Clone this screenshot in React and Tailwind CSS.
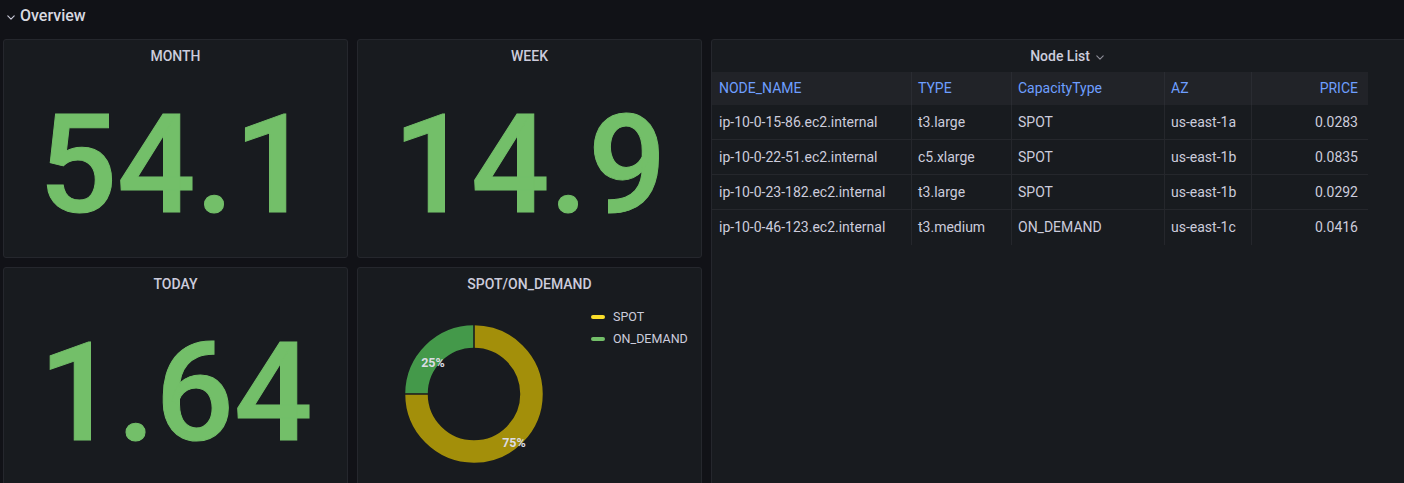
import React from "react";

const rows = [
  ["ip-10-0-15-86.ec2.internal", "t3.large", "SPOT", "us-east-1a", "0.0283"],
  ["ip-10-0-22-51.ec2.internal", "c5.xlarge", "SPOT", "us-east-1b", "0.0835"],
  ["ip-10-0-23-182.ec2.internal", "t3.large", "SPOT", "us-east-1b", "0.0292"],
  ["ip-10-0-46-123.ec2.internal", "t3.medium", "ON_DEMAND", "us-east-1c", "0.0416"],
];

function Chevron({ className }) {
  return (
    <svg className={className} viewBox="0 0 10 6" width="8" height="5" fill="none">
      <path d="M1 1l4 4 4-4" stroke="currentColor" strokeWidth="1.4" strokeLinecap="round" strokeLinejoin="round" />
    </svg>
  );
}

function Panel({ title, children, className = "" }) {
  return (
    <div className={`flex flex-col bg-[#181b1f] border border-[#25272d] rounded-[3px] overflow-hidden ${className}`}>
      <div className="h-[32px] shrink-0 flex items-center justify-center text-[14px] font-medium text-[#ccccdc]">
        {title}
      </div>
      {children}
    </div>
  );
}

function Stat({ title, value }) {
  return (
    <Panel title={title}>
      <div className="flex-1 flex items-center justify-center">
        <span className="text-[138px] leading-none font-medium text-[#73bf69] [-webkit-text-stroke:1px_#73bf69]">{value}</span>
      </div>
    </Panel>
  );
}

function Donut() {
  const r = 57.5;
  const c = 2 * Math.PI * r;
  const yellow = c * 0.75;
  const green = c * 0.25;
  return (
    <svg width="140" height="140" viewBox="0 0 140 140">
      <g transform="rotate(-90 70 70)">
        <circle cx="70" cy="70" r={r} fill="none" stroke="#a38f0a" strokeWidth="22.5"
          strokeDasharray={`${yellow} ${c}`} />
        <circle cx="70" cy="70" r={r} fill="none" stroke="#44994a" strokeWidth="22.5"
          strokeDasharray={`${green} ${c}`} strokeDashoffset={-yellow} />
      </g>
      <line x1="70" y1="0" x2="70" y2="24.5" stroke="#181b1f" strokeWidth="1.6" />
      <line x1="0" y1="70" x2="24.5" y2="70" stroke="#181b1f" strokeWidth="1.6" />
      <text x="29" y="42.5" textAnchor="middle" fontFamily="Roboto, sans-serif" fontWeight="700" fontSize="12.5" fill="#dcdce4">25%</text>
      <text x="110" y="123" textAnchor="middle" fontFamily="Roboto, sans-serif" fontWeight="700" fontSize="12.5" fill="#dcdce4">75%</text>
    </svg>
  );
}

export default function App() {
  return (
    <div className="w-[1404px] h-[483px] overflow-hidden bg-[#111217] text-[#ccccdc]" style={{ fontFamily: "Roboto, 'Liberation Sans', sans-serif" }}>
      <div className="h-[39px] flex items-start pt-[6px] pl-[7px] gap-[5px]">
        <div className="h-[20px] flex items-center pt-[3px]">
          <Chevron className="text-[#ccccdc]" />
        </div>
        <span className="text-[16px] leading-[20px] font-medium text-[#d8d9e0]">Overview</span>
      </div>
      <div className="grid grid-cols-[345px_345px_712px] grid-rows-[219px_219px] gap-[9px] pl-[3px]">
        <Stat title="MONTH" value="54.1" />
        <Stat title="WEEK" value="14.9" />
        <Panel
          className="row-span-2"
          title={
            <span className="flex items-center gap-[6px]">
              Node List
              <Chevron className="text-[#8e8e99] mt-[2px]" />
            </span>
          }
        >
          <div className="w-[656px] text-[14px]">
            <div className="flex h-[33px] bg-[#212328] text-[#6e9fff]">
              <div className="w-[200px] flex items-center pl-[7px] border-r border-[#2a2c32]">NODE_NAME</div>
              <div className="w-[100px] flex items-center pl-[6px] border-r border-[#2a2c32]">TYPE</div>
              <div className="w-[153px] flex items-center pl-[6px] border-r border-[#2a2c32]">CapacityType</div>
              <div className="w-[87px] flex items-center pl-[6px] border-r border-[#2a2c32]">AZ</div>
              <div className="w-[116px] flex items-center justify-end pr-[10px]">PRICE</div>
            </div>
            {rows.map((r, i) => (
              <div key={i} className={`flex h-[35px] text-[#ccccdc] ${i < rows.length - 1 ? "border-b border-[#25272c]" : ""}`}>
                <div className="w-[200px] flex items-center pl-[7px] border-r border-[#25272c]">{r[0]}</div>
                <div className="w-[100px] flex items-center pl-[6px] border-r border-[#25272c]">{r[1]}</div>
                <div className="w-[153px] flex items-center pl-[6px] border-r border-[#25272c]">{r[2]}</div>
                <div className="w-[87px] flex items-center pl-[6px] border-r border-[#25272c]">{r[3]}</div>
                <div className="w-[116px] flex items-center justify-end pr-[10px]">{r[4]}</div>
              </div>
            ))}
          </div>
        </Panel>
        <Stat title="TODAY" value="1.64" />
        <Panel title="SPOT/ON_DEMAND">
          <div className="flex-1 flex items-start">
            <div className="ml-[46px] mt-[24px]">
              <Donut />
            </div>
            <div className="ml-[47px] mt-[6px] flex flex-col text-[12.5px] text-[#ccccdc]">
              <div className="h-[22px] flex items-center gap-[8px]">
                <span className="w-[14px] h-[4px] rounded-[2px] bg-[#fade2a]" />
                <span>SPOT</span>
              </div>
              <div className="h-[22px] flex items-center gap-[8px]">
                <span className="w-[14px] h-[4px] rounded-[2px] bg-[#73bf69]" />
                <span>ON_DEMAND</span>
              </div>
            </div>
          </div>
        </Panel>
      </div>
    </div>
  );
}
